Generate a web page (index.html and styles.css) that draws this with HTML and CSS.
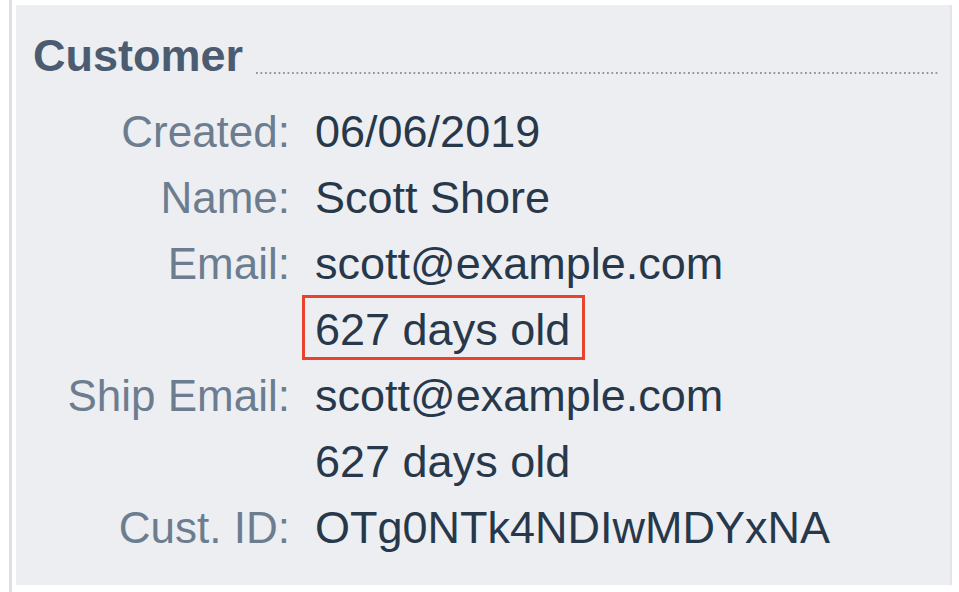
FILE: index.html
```html
<!DOCTYPE html>
<html lang="en">
<head>
    <meta charset="UTF-8">
    <title>Customer</title>
    <link rel="stylesheet" href="styles.css">
</head>
<body>
    <div class="frame">
        <div class="panel">
            <div class="panel-head">
                <h2>Customer</h2>
                <div class="leader"></div>
            </div>
            <div class="fields">
                <div class="label">Created:</div>
                <div class="value">06/06/2019</div>

                <div class="label">Name:</div>
                <div class="value">Scott Shore</div>

                <div class="label">Email:</div>
                <div class="value">scott@example.com</div>

                <div class="label"></div>
                <div class="value"><span class="highlight">627 days old</span></div>

                <div class="label">Ship Email:</div>
                <div class="value">scott@example.com</div>

                <div class="label"></div>
                <div class="value">627 days old</div>

                <div class="label">Cust. ID:</div>
                <div class="value">OTg0NTk4NDIwMDYxNA</div>
            </div>
        </div>
    </div>
</body>
</html>
```

FILE: styles.css
```css
html, body {
    margin: 0;
    padding: 0;
    background: #ffffff;
}
body {
    font-family: "Liberation Sans", Arial, sans-serif;
}
.frame {
    margin-left: 9px;
    padding: 5px 7px 7px 4px;
    border-left: 3px solid #dcdfe5;
    height: 580px;
}
.panel {
    background: #edeef2;
    border-right: 2px solid #e2e4e8;
    height: 580px;
    padding: 25px 10px 0 17px;
    box-sizing: border-box;
}
.panel-head {
    display: flex;
    align-items: flex-end;
}
.panel-head h2 {
    margin: 0;
    font-size: 45px;
    line-height: 52px;
    font-weight: bold;
    color: #4b5c71;
}
.leader {
    flex: 1;
    height: 2px;
    margin: 0 0 8px 13px;
    background-image: linear-gradient(to right, #8c99a8 2px, transparent 2px);
    background-size: 4.5px 2px;
    background-repeat: repeat-x;
}
.fields {
    display: grid;
    grid-template-columns: 257px 1fr;
    grid-auto-rows: 66px;
    column-gap: 25px;
    margin-top: 17px;
    font-size: 44px;
    line-height: 66px;
}
.label {
    text-align: right;
    color: #6c7d90;
}
.value {
    font-size: 45px;
    color: #28384b;
}
.highlight {
    display: block;
    width: fit-content;
    margin: -2px 0 0 -13px;
    padding: 5px 12px 0 10px;
    line-height: 54px;
    border: 3px solid #e8432b;
}
```
